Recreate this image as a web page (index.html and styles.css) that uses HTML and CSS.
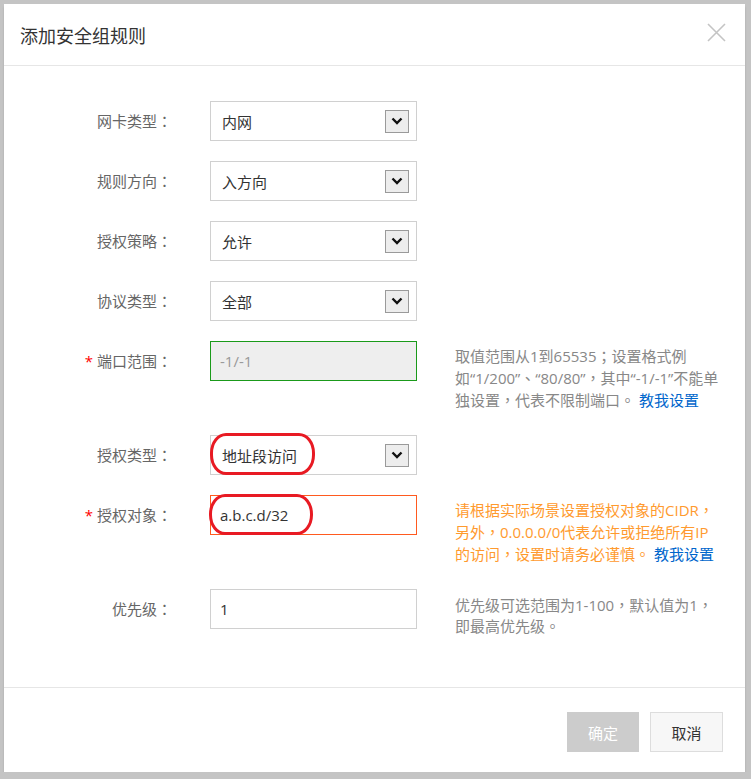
FILE: index.html
```html
<!DOCTYPE html>
<html lang="zh-CN">
<head>
  <meta charset="UTF-8" />
  <meta name="viewport" content="width=device-width, initial-scale=1.0"/>
  <title>添加安全组规则</title>
  <link rel="stylesheet" href="styles.css">
</head>
<body>
  <div class="dialog">
    <div class="dialog-header">
      <h2 class="title">添加安全组规则</h2>
      <span class="close">
        <svg width="19" height="19" viewBox="0 0 19 19"><path d="M1 1L18 18M18 1L1 18" stroke="#c4c4c4" stroke-width="1.6" fill="none"/></svg>
      </span>
    </div>

    <div class="dialog-body">
      <div class="row">
        <div class="label">网卡类型：</div>
        <div class="select"><span class="value">内网</span><span class="arrow"><svg width="12" height="8" viewBox="0 0 12 8"><path d="M1.5 1.5L6 6L10.5 1.5" stroke="#111" stroke-width="2.4" fill="none"/></svg></span></div>
      </div>
      <div class="row">
        <div class="label">规则方向：</div>
        <div class="select"><span class="value">入方向</span><span class="arrow"><svg width="12" height="8" viewBox="0 0 12 8"><path d="M1.5 1.5L6 6L10.5 1.5" stroke="#111" stroke-width="2.4" fill="none"/></svg></span></div>
      </div>
      <div class="row">
        <div class="label">授权策略：</div>
        <div class="select"><span class="value">允许</span><span class="arrow"><svg width="12" height="8" viewBox="0 0 12 8"><path d="M1.5 1.5L6 6L10.5 1.5" stroke="#111" stroke-width="2.4" fill="none"/></svg></span></div>
      </div>
      <div class="row">
        <div class="label">协议类型：</div>
        <div class="select"><span class="value">全部</span><span class="arrow"><svg width="12" height="8" viewBox="0 0 12 8"><path d="M1.5 1.5L6 6L10.5 1.5" stroke="#111" stroke-width="2.4" fill="none"/></svg></span></div>
      </div>
      <div class="row">
        <div class="label"><span class="req">*</span> 端口范围：</div>
        <div class="input input-disabled">-1/-1</div>
        <div class="help">
          取值范围从1到65535；设置格式例<br>
          如“1/200”、“80/80”，其中“-1/-1”不能单<br>
          独设置，代表不限制端口。 <a class="link" href="#">教我设置</a>
        </div>
      </div>
      <div class="row">
        <div class="label">授权类型：</div>
        <div class="select"><span class="value">地址段访问</span><span class="arrow"><svg width="12" height="8" viewBox="0 0 12 8"><path d="M1.5 1.5L6 6L10.5 1.5" stroke="#111" stroke-width="2.4" fill="none"/></svg></span><span class="mark mark-type"></span></div>
      </div>
      <div class="row">
        <div class="label"><span class="req">*</span> 授权对象：</div>
        <div class="input input-error">a.b.c.d/32<span class="mark mark-object"></span></div>
        <div class="help help-warn">
          请根据实际场景设置授权对象的CIDR，<br>
          另外，0.0.0.0/0代表允许或拒绝所有IP<br>
          的访问，设置时请务必谨慎。 <a class="link" href="#">教我设置</a>
        </div>
      </div>
      <div class="row">
        <div class="label">优先级：</div>
        <div class="input">1</div>
        <div class="help help-low">
          优先级可选范围为1-100，默认值为1，<br>
          即最高优先级。
        </div>
      </div>
    </div>

    <div class="dialog-footer">
      <button class="btn btn-primary">确定</button>
      <button class="btn">取消</button>
    </div>
  </div>
</body>
</html>
```

FILE: styles.css
```css
body {
  margin: 0;
  background: #c4c4c4;
  font-family: "Open Sans", "Noto Sans CJK TC", sans-serif;
  color: #333;
}

.dialog {
  margin: 4px 0 0 4px;
  width: 741px;
  height: 768px;
  background: white;
  display: flex;
  flex-direction: column;
  box-shadow: 0 3px 2px #a9a9a9;
}

.dialog-header {
  height: 61px;
  border-bottom: 1px solid #e6e6e6;
  display: flex;
  align-items: center;
  justify-content: space-between;
  padding: 0 19px 0 16px;
}

.title {
  margin: 0;
  font-family: "Noto Sans CJK SC", sans-serif;
  font-size: 18px;
  font-weight: normal;
  color: #333;
}

.close {
  display: flex;
  margin-top: -4px;
}

.dialog-body {
  flex: 1;
  padding-top: 35px;
}

.row {
  display: flex;
  align-items: flex-start;
  margin-bottom: 20px;
}

/* centred full-width punctuation, as in the original */
.label,
.help {
  font-feature-settings: "locl" 0;
}

.label {
  width: 168px;
  text-align: right;
  line-height: 40px;
  font-size: 15px;
  color: #666;
}

.req {
  color: #f00;
}

.select,
.input {
  position: relative;
  box-sizing: border-box;
  width: 207px;
  height: 40px;
  margin-left: 38px;
  border: 1px solid #d0d0d0;
  display: flex;
  align-items: center;
  justify-content: space-between;
  padding: 0 7px 0 11px;
  font-size: 15px;
  color: #333;
}

.input {
  padding-left: 9px;
}

.input-disabled {
  background: #eee;
  border-color: #1a9a1a;
  color: #999;
}

.input-error {
  border-color: #ff5a1f;
}

.arrow {
  width: 24px;
  height: 23px;
  box-sizing: border-box;
  border: 1px solid #9a9a9a;
  background: #ededed;
  display: flex;
  align-items: center;
  justify-content: center;
}

.mark {
  position: absolute;
  border: 3px solid #e81a23;
  border-radius: 16px / 20px;
  box-sizing: border-box;
}

.mark-type {
  left: -1px;
  top: -3px;
  width: 105px;
  height: 42px;
}

.mark-object {
  left: -2px;
  top: -2px;
  width: 104px;
  height: 41px;
}

.help {
  margin-left: 38px;
  padding: 4px 0;
  font-size: 15px;
  line-height: 22px;
  color: #888;
  white-space: nowrap;
}

.help-warn {
  color: #ff9a2e;
}

.help-low {
  padding-top: 6px;
  line-height: 21px;
}

.link {
  color: #0066cc;
  text-decoration: none;
}

.dialog-footer {
  border-top: 1px solid #e6e6e6;
  padding: 24px 22px 20px 0;
  display: flex;
  justify-content: flex-end;
  gap: 11px;
}

.btn {
  width: 73px;
  height: 40px;
  font-family: inherit;
  font-size: 15px;
  color: #333;
  background: #f7f7f7;
  border: 1px solid #ddd;
}

.btn-primary {
  width: 72px;
  background: #ccc;
  border-color: #ccc;
  color: white;
}
```
